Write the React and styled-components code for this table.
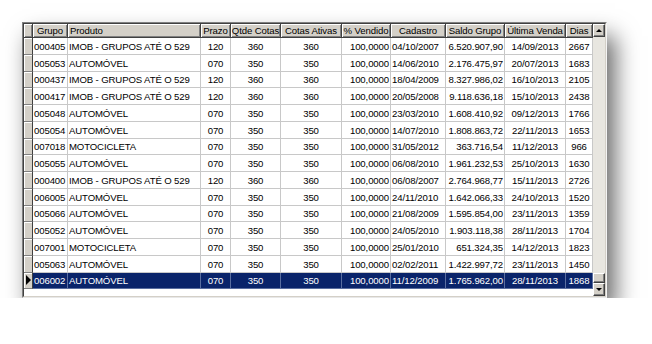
import styled, { createGlobalStyle } from 'styled-components'

const GlobalStyle = createGlobalStyle`
  html, body {
    margin: 0;
    padding: 0;
    background: #ffffff;
  }
  body {
    font-family: "Liberation Sans", Arial, sans-serif;
  }
`

const columns = [
  { title: 'Grupo', width: 35, align: 'left', head: 'center' },
  { title: 'Produto', width: 133, align: 'left', head: 'left' },
  { title: 'Prazo', width: 30, align: 'center', head: 'center' },
  { title: 'Qtde Cotas', width: 50, align: 'center', head: 'center' },
  { title: 'Cotas Ativas', width: 61, align: 'center', head: 'center' },
  { title: '% Vendido', width: 49, align: 'right', head: 'center' },
  { title: 'Cadastro', width: 55, align: 'left', head: 'center' },
  { title: 'Saldo Grupo', width: 59, align: 'right', head: 'center' },
  { title: 'Última Venda', width: 61, align: 'center', head: 'center' },
  { title: 'Dias', width: 27, align: 'center', head: 'center' },
]

const IMOB = 'IMOB - GRUPOS ATÉ O 529'

const rows = [
  ['000405', IMOB, '120', '360', '360', '100,0000', '04/10/2007', '6.520.907,90', '14/09/2013', '2667'],
  ['005053', 'AUTOMÓVEL', '070', '350', '350', '100,0000', '14/06/2010', '2.176.475,97', '20/07/2013', '1683'],
  ['000437', IMOB, '120', '360', '360', '100,0000', '18/04/2009', '8.327.986,02', '16/10/2013', '2105'],
  ['000417', IMOB, '120', '360', '360', '100,0000', '20/05/2008', '9.118.636,18', '15/10/2013', '2438'],
  ['005048', 'AUTOMÓVEL', '070', '350', '350', '100,0000', '23/03/2010', '1.608.410,92', '09/12/2013', '1766'],
  ['005054', 'AUTOMÓVEL', '070', '350', '350', '100,0000', '14/07/2010', '1.808.863,72', '22/11/2013', '1653'],
  ['007018', 'MOTOCICLETA', '070', '350', '350', '100,0000', '31/05/2012', '363.716,54', '11/12/2013', '966'],
  ['005055', 'AUTOMÓVEL', '070', '350', '350', '100,0000', '06/08/2010', '1.961.232,53', '25/10/2013', '1630'],
  ['000400', IMOB, '120', '360', '360', '100,0000', '06/08/2007', '2.764.968,77', '15/11/2013', '2726'],
  ['006005', 'AUTOMÓVEL', '070', '350', '350', '100,0000', '24/11/2010', '1.642.066,33', '24/10/2013', '1520'],
  ['005066', 'AUTOMÓVEL', '070', '350', '350', '100,0000', '21/08/2009', '1.595.854,00', '23/11/2013', '1359'],
  ['005052', 'AUTOMÓVEL', '070', '350', '350', '100,0000', '24/05/2010', '1.903.118,38', '28/11/2013', '1704'],
  ['007001', 'MOTOCICLETA', '070', '350', '350', '100,0000', '25/01/2010', '651.324,35', '14/12/2013', '1823'],
  ['005063', 'AUTOMÓVEL', '070', '350', '350', '100,0000', '02/02/2011', '1.422.997,72', '23/11/2013', '1450'],
  ['006002', 'AUTOMÓVEL', '070', '350', '350', '100,0000', '11/12/2009', '1.765.962,00', '28/11/2013', '1868'],
]

const SELECTED = 14

const Page = styled.div`
  padding: 22px 0 0 22px;
`

const Frame = styled.div`
  width: 583px;
  height: 274px;
  border: 1px solid;
  border-color: #808080 #f4f4f4 #e8e8e8 #808080;
  box-shadow: 8px 14px 22px rgba(0, 0, 0, 0.6);
  background: #ffffff;
`

const Inner = styled.div`
  display: flex;
  height: 272px;
  border: 1px solid;
  border-color: #404040 #d4d0c8 #d4d0c8 #404040;
`

const Table = styled.div`
  flex: 1;
  display: grid;
  grid-template-columns: 9px ${columns.map(c => c.width + 'px').join(' ')};
  grid-template-rows: 14px repeat(${rows.length}, 16.75px) 1fr;
  font-size: 9.6px;
  letter-spacing: -0.12px;
  color: #000000;
`

const HeaderCell = styled.div`
  box-sizing: border-box;
  display: flex;
  align-items: center;
  justify-content: ${p => (p.$align === 'left' ? 'flex-start' : 'center')};
  padding: 0 2px;
  background: #d4d0c8;
  border-right: 1px solid #404040;
  border-bottom: 1px solid #404040;
  box-shadow: inset 1px 1px 0 #ffffff, inset -1px -1px 0 #808080;
  white-space: nowrap;
  overflow: hidden;
`

const Indicator = styled.div`
  box-sizing: border-box;
  display: flex;
  align-items: center;
  justify-content: center;
  background: #d4d0c8;
  border-right: 1px solid #404040;
  border-bottom: 1px solid #808080;
  box-shadow: inset 1px 1px 0 #ffffff;
`

const Pointer = styled.span`
  width: 0;
  height: 0;
  margin-left: 1px;
  border-top: 5px solid transparent;
  border-bottom: 5px solid transparent;
  border-left: 5px solid #000000;
`

const Cell = styled.div`
  box-sizing: border-box;
  display: flex;
  align-items: center;
  justify-content: ${p =>
    p.$align === 'right' ? 'flex-end' : p.$align === 'center' ? 'center' : 'flex-start'};
  padding: 1px 1px 0 1px;
  white-space: nowrap;
  overflow: hidden;
  background: ${p => (p.$selected ? '#0a246a' : '#ffffff')};
  color: ${p => (p.$selected ? '#ffffff' : '#000000')};
  border-right: 1px solid ${p => (p.$selected ? '#5a6ea0' : '#c8c8c8')};
  border-bottom: 1px solid ${p => (p.$selected ? '#5a6ea0' : '#c8c8c8')};
`

const Filler = styled.div`
  grid-column: 1 / -1;
  background: #ffffff;
`

const ScrollBar = styled.div`
  width: 14px;
  display: flex;
  flex-direction: column;
  background: #e8e6e0;
`

const Track = styled.div`
  flex: 1;
`

const RaisedBox = styled.div`
  box-sizing: border-box;
  height: ${p => p.$h}px;
  display: flex;
  align-items: center;
  justify-content: center;
  background: #d4d0c8;
  border: 1px solid;
  border-color: #ffffff #404040 #404040 #ffffff;
  box-shadow: inset -1px -1px 0 #808080;
`

const Arrow = styled.span`
  width: 0;
  height: 0;
  border-left: 3px solid transparent;
  border-right: 3px solid transparent;
  ${p =>
    p.$dir === 'up'
      ? 'border-bottom: 3px solid #000000;'
      : 'border-top: 3px solid #000000;'}
`

export default function App() {
  return (
    <>
      <GlobalStyle />
      <Page>
        <Frame>
          <Inner>
            <Table>
              <HeaderCell />
              {columns.map(c => (
                <HeaderCell key={c.title} $align={c.head}>
                  {c.title}
                </HeaderCell>
              ))}
              {rows.map((row, i) => {
                const selected = i === SELECTED
                return [
                  <Indicator key={'i' + i}>{selected && <Pointer />}</Indicator>,
                  ...row.map((value, j) => (
                    <Cell key={i + '-' + j} $align={columns[j].align} $selected={selected}>
                      {value}
                    </Cell>
                  )),
                ]
              })}
              <Filler />
            </Table>
            <ScrollBar>
              <RaisedBox $h={13}>
                <Arrow $dir="up" />
              </RaisedBox>
              <Track />
              <RaisedBox $h={10} />
              <RaisedBox $h={13}>
                <Arrow $dir="down" />
              </RaisedBox>
            </ScrollBar>
          </Inner>
        </Frame>
      </Page>
    </>
  )
}
